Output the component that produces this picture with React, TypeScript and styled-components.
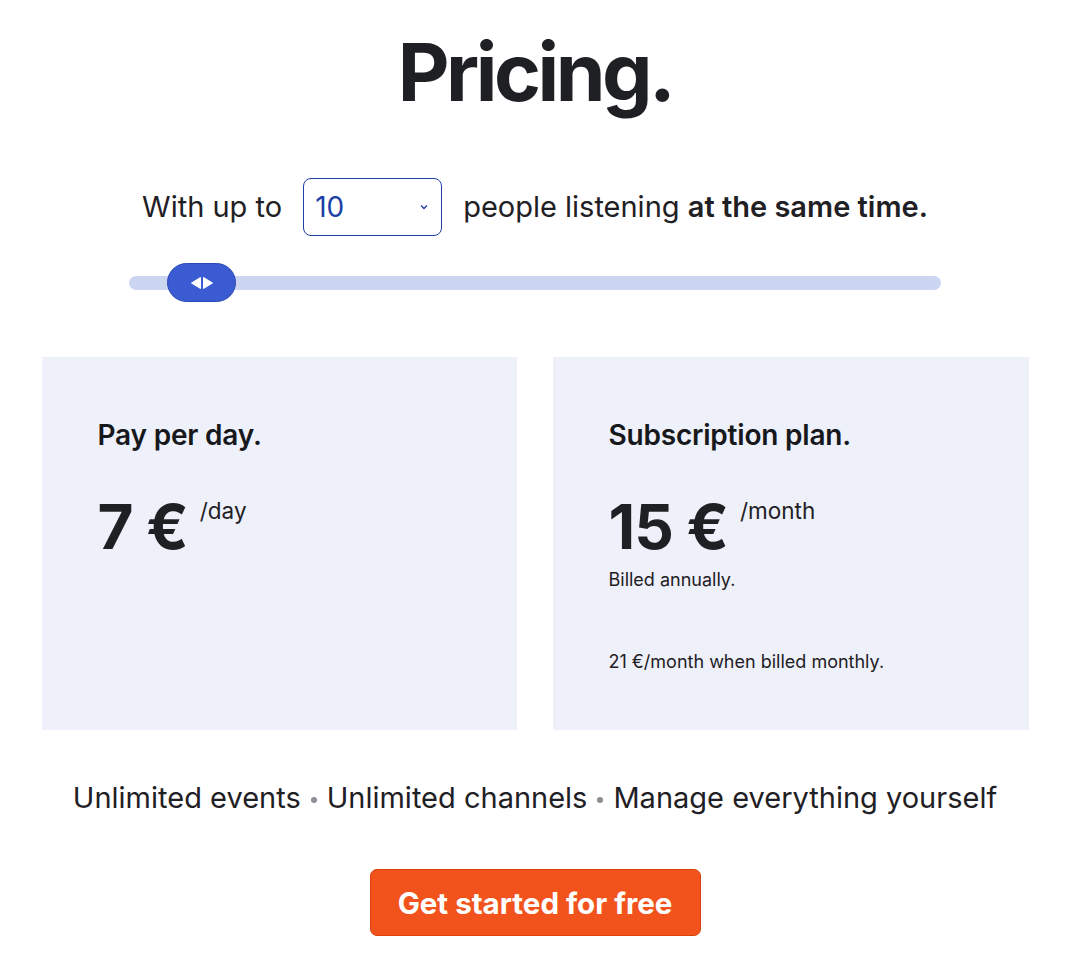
import React from 'react';
import styled, { createGlobalStyle } from 'styled-components';

const GlobalStyle = createGlobalStyle`
  html, body {
    margin: 0;
    padding: 0;
    background: #ffffff;
  }
  body {
    font-family: Inter, "Noto Sans", "Liberation Sans", sans-serif;
    color: #1f2024;
  }
`;

const Page = styled.main`
  width: 1070px;
  display: flex;
  flex-direction: column;
  align-items: center;
  padding-top: 22px;
`;

const Title = styled.h1`
  margin: 0;
  font-size: 80px;
  line-height: 100px;
  font-weight: 700;
  letter-spacing: -3.5px;
  color: #1f2024;
`;

/* sentence with the select */
const Sentence = styled.div`
  margin-top: 56px;
  display: flex;
  align-items: center;
  column-gap: 21px;
  font-size: 29px;
  line-height: 34px;
  color: #1f2024;
`;

const Strong = styled.strong`
  font-weight: 600;
`;

const SelectBox = styled.div`
  box-sizing: border-box;
  width: 139px;
  height: 58px;
  border: 1.5px solid #1d3fa6;
  border-radius: 8px;
  padding: 0 12px 0 11px;
  display: flex;
  align-items: center;
  justify-content: space-between;
  color: #1d3fa6;
  font-size: 28px;
`;

const Chevron = styled.svg`
  width: 10px;
  height: 10px;
`;

const Track = styled.div`
  position: relative;
  margin-top: 40px;
  width: 812px;
  height: 14px;
  border-radius: 7px;
  background: #ccd5f1;
`;

const Thumb = styled.div`
  position: absolute;
  left: 38px;
  top: -13px;
  width: 69px;
  height: 39px;
  border-radius: 20px;
  background: #3a5bd2;
  border: 1px solid #2c49b5;
  box-sizing: border-box;
  display: flex;
  align-items: center;
  justify-content: center;
`;

const Cards = styled.div`
  margin-top: 67px;
  display: grid;
  grid-template-columns: 475px 476px;
  column-gap: 36px;
`;

const Card = styled.section`
  box-sizing: border-box;
  height: 373px;
  background: #eef0fa;
  padding: 61px 56px 0 56px;
  display: flex;
  flex-direction: column;
`;

const CardTitle = styled.h2`
  margin: 0;
  font-size: 28px;
  line-height: 34px;
  font-weight: 600;
  letter-spacing: -0.2px;
  color: #17181c;
`;

const PriceRow = styled.div`
  margin-top: 40px;
  display: flex;
  align-items: flex-start;
  column-gap: 12px;
`;

const Amount = styled.span`
  font-size: 62px;
  line-height: 70px;
  font-weight: 700;
  letter-spacing: -1px;
  color: #1f2024;
`;

const Per = styled.span`
  font-size: 22.5px;
  line-height: 26px;
  color: #1f2024;
  margin-top: 6px;
`;

const Note = styled.p<{ $gap: number }>`
  margin: ${(p) => p.$gap}px 0 0 0;
  font-size: 18px;
  line-height: 20px;
  color: #1f2024;
`;

const Features = styled.div`
  margin-top: 50px;
  display: flex;
  align-items: center;
  column-gap: 10px;
  font-size: 29px;
  line-height: 36px;
  color: #1f2024;
`;

const Dot = styled.span`
  width: 6px;
  height: 6px;
  border-radius: 50%;
  background: #8a8d96;
  margin-top: 4px;
`;

const Cta = styled.button.attrs({ type: 'button' })`
  margin-top: 53px;
  width: 331px;
  height: 67px;
  border: 1px solid #d9420f;
  border-radius: 7px;
  background: #f2531c;
  color: #ffffff;
  font-family: inherit;
  font-size: 29.5px;
  font-weight: 700;
  cursor: pointer;
`;

const features = ['Unlimited events', 'Unlimited channels', 'Manage everything yourself'];

export default function App() {
  return (
    <>
      <GlobalStyle />
      <Page>
        <Title>Pricing.</Title>

        <Sentence>
          <span>With up to</span>
          <SelectBox>
            <span>10</span>
            <Chevron viewBox="0 0 10 10">
              <path d="M2 3.5 L5 6.5 L8 3.5" fill="none" stroke="#1d3fa6" strokeWidth="1.4" />
            </Chevron>
          </SelectBox>
          <span>
            people listening <Strong>at the same time.</Strong>
          </span>
        </Sentence>

        <Track>
          <Thumb>
            <svg width="26" height="14" viewBox="0 0 26 14">
              <path d="M11.5 1.5 L2.5 7 L11.5 12.5 Z" fill="#ffffff" strokeLinejoin="round" stroke="#ffffff" strokeWidth="1" />
              <path d="M14.5 1.5 L23.5 7 L14.5 12.5 Z" fill="#ffffff" strokeLinejoin="round" stroke="#ffffff" strokeWidth="1" />
            </svg>
          </Thumb>
        </Track>

        <Cards>
          <Card>
            <CardTitle>Pay per day.</CardTitle>
            <PriceRow>
              <Amount>7 €</Amount>
              <Per>/day</Per>
            </PriceRow>
          </Card>
          <Card>
            <CardTitle>Subscription plan.</CardTitle>
            <PriceRow>
              <Amount>15 €</Amount>
              <Per>/month</Per>
            </PriceRow>
            <Note $gap={8}>Billed annually.</Note>
            <Note $gap={62}>21 €/month when billed monthly.</Note>
          </Card>
        </Cards>

        <Features>
          {features.map((f, i) => (
            <React.Fragment key={f}>
              {i > 0 && <Dot />}
              <span>{f}</span>
            </React.Fragment>
          ))}
        </Features>

        <Cta>Get started for free</Cta>
      </Page>
    </>
  );
}
